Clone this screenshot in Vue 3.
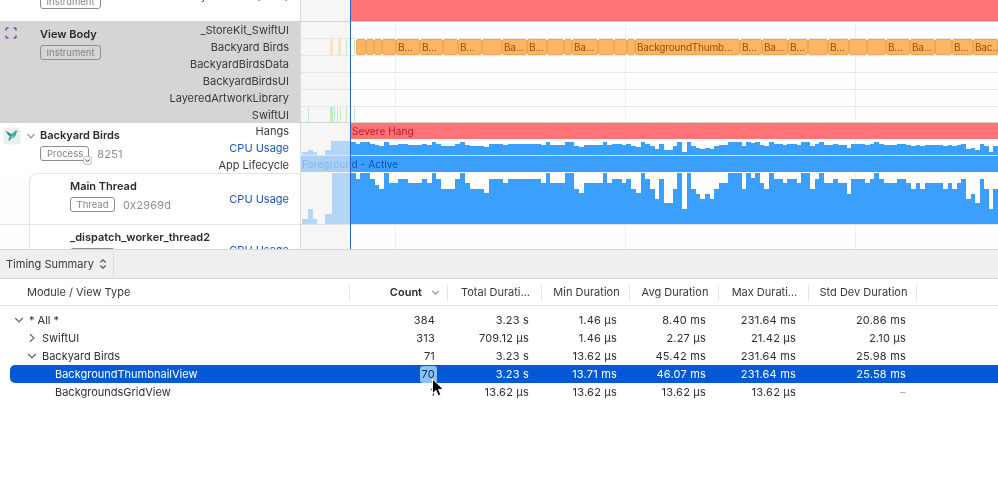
<template>
  <main class="page">
    <section class="trace">
      <!-- clipped track above the view body -->
      <div class="track track-top">
        <div class="side side-top">
          <span class="badge badge-top">Instrument</span>
          <span class="lane-name top-name">Backyard Birds (8251)</span>
        </div>
        <div class="lanes"><div class="hang-bar top-hang"></div></div>
      </div>

      <div class="track track-body">
        <div class="side side-body">
          <svg class="focus-icon" width="12" height="12" viewBox="0 0 12 12">
            <path d="M1 3.5V2.2A1.2 1.2 0 0 1 2.2 1H3.5M8.5 1H9.8A1.2 1.2 0 0 1 11 2.2V3.5M11 8.5V9.8A1.2 1.2 0 0 1 9.8 11H8.5M3.5 11H2.2A1.2 1.2 0 0 1 1 9.8V8.5" fill="none" stroke="#7a35d6" stroke-width="1.4" />
          </svg>
          <div class="title-col">
            <div class="title">View Body</div>
            <span class="badge">Instrument</span>
          </div>
          <div class="names">
            <div v-for="m in modules" :key="m" class="lane-name body-name">{{ m }}</div>
          </div>
        </div>
        <div class="lanes">
          <div class="lane"></div>
          <div class="lane intervals-lane">
            <i class="tick orange" style="left: 29px"></i>
            <i class="tick orange" style="left: 37px"></i>
            <i class="tick green thin" style="left: 45px"></i>
            <i class="tick green thin" style="left: 53px"></i>
            <div class="intervals">
              <div v-for="(s, i) in spans" :key="i" class="interval" :style="{ width: s[0] + 'px' }">{{ s[1] }}</div>
            </div>
          </div>
          <div class="lane"></div>
          <div class="lane"></div>
          <div class="lane"></div>
          <div class="lane intervals-lane last-lane">
            <i class="tick green thin" style="left: 7px"></i>
            <i class="tick green" style="left: 29px"></i>
            <i class="tick green thin" style="left: 33px"></i>
            <i class="tick green thin" style="left: 36px"></i>
            <i class="tick green thin" style="left: 39px"></i>
            <i class="tick green thin" style="left: 45px"></i>
            <i class="tick green thin" style="left: 53px"></i>
          </div>
        </div>
      </div>

      <div class="track track-process">
        <div class="side side-process">
          <svg class="app-icon" width="18" height="18" viewBox="0 0 18 18">
            <rect x="0.5" y="0.5" width="17" height="17" rx="4" fill="#eceff0" />
            <path d="M3 4 8 7 10.5 5.5 12.5 3.5 15 4 13.5 5.3 13 8 10.8 11 8.2 11.6 5.8 14.5 5.4 12 6.6 9.4Z" fill="#2bb3bd" />
            <path d="M3 4 8.2 7.2 7.4 9.6 5 7.4Z" fill="#1b8294" />
            <path d="M8.2 10 10.8 8.2 10.2 11.2 8.2 11.8Z" fill="#eebb55" />
          </svg>
          <svg class="chev chev-process" width="10" height="10" viewBox="0 0 10 10"><path d="M1.5 3.2 5 6.8 8.5 3.2" /></svg>
          <div class="title-col">
            <div class="title">Backyard Birds</div>
            <div class="badge-line">
              <span class="badge badge-menu">Process
                <svg class="mini" width="9" height="9" viewBox="0 0 9 9"><rect x="0.5" y="0.5" width="8" height="8" rx="2" fill="#f3f3f3" stroke="#aaa" stroke-width="0.6" /><path d="M2.5 3.6 4.5 5.6 6.5 3.6" fill="none" stroke="#444" stroke-width="1" /></svg>
              </span>
              <span class="pid">8251</span>
            </div>
          </div>
          <div class="names names-process">
            <div class="lane-name">Hangs</div>
            <div class="lane-name blue-name">CPU Usage</div>
            <div class="lane-name">App Lifecycle</div>
          </div>
        </div>
        <div class="lanes">
          <div class="hang-bar hang-lane">Severe Hang</div>
          <svg class="chart cpu-chart" width="697" height="17" shape-rendering="crispEdges">
            <path :d="cpuBefore" fill="#b3d6f8" />
            <path :d="cpuPath" fill="#3ba0fd" />
          </svg>
          <div class="lifecycle"><span class="life-text">Foreground - Active</span></div>
        </div>
      </div>

      <div class="track track-thread">
        <div class="side side-thread">
          <div class="title-col thread-col">
            <div class="title">Main Thread</div>
            <div class="badge-line">
              <span class="badge">Thread</span>
              <span class="pid">0x2969d</span>
            </div>
          </div>
          <div class="lane-name blue-name thread-name">CPU Usage</div>
        </div>
        <div class="lanes">
          <svg class="chart" width="697" height="51" shape-rendering="crispEdges">
            <path :d="threadBefore" fill="#b3d6f8" />
            <path :d="threadPath" fill="#3ba0fd" />
          </svg>
        </div>
      </div>

      <div class="track track-worker">
        <div class="side side-worker">
          <div class="title-col thread-col">
            <div class="title">_dispatch_worker_thread2</div>
            <div class="badge-line"><span class="badge">Thread</span></div>
          </div>
          <div class="lane-name blue-name thread-name">CPU Usage</div>
        </div>
        <div class="lanes"></div>
      </div>

      <div class="playhead"></div>
    </section>

    <div class="toolbar">
      <button class="picker">
        <span>Timing Summary</span>
        <svg width="8" height="12" viewBox="0 0 8 12"><path d="M1.2 4.5 4 1.8 6.8 4.5M1.2 7.5 4 10.2 6.8 7.5" fill="none" stroke="#555" stroke-width="1.1" /></svg>
      </button>
    </div>

    <div class="table-head grid">
      <div class="head-name">Module / View Type</div>
      <div class="head-count">Count
        <svg class="chev" width="9" height="9" viewBox="0 0 10 10"><path d="M1.5 3.2 5 6.8 8.5 3.2" /></svg>
      </div>
      <div v-for="h in heads" :key="h" class="head-cell">{{ h }}</div>
      <div class="head-fill"></div>
    </div>

    <div class="table-body">
      <div v-for="r in rows" :key="r.name" class="grid row" :class="{ selected: r.selected }">
        <div class="cell-name" :style="{ paddingLeft: r.indent + 'px' }">
          <svg v-if="r.open !== undefined" class="chev row-chev" width="10" height="10" viewBox="0 0 10 10">
            <path :d="r.open ? 'M1.2 3 5 7 8.8 3' : 'M3 1.2 7 5 3 8.8'" />
          </svg>
          {{ r.name }}
        </div>
        <div class="num count-cell"><span :class="{ picked: r.selected }">{{ r.count }}</span></div>
        <div class="num">{{ r.total }}</div>
        <div class="num">{{ r.min }}</div>
        <div class="num">{{ r.avg }}</div>
        <div class="num">{{ r.max }}</div>
        <div class="num std" :class="{ none: r.std === '–' }">{{ r.std }}</div>
        <div></div>
      </div>

      <svg class="cursor" width="14" height="20" viewBox="0 0 14 20">
        <path d="M1.5 1 1.5 15.5 5 12.4 7.2 17.8 9.8 16.7 7.6 11.5 12.2 11.2Z" fill="#000" stroke="#fff" stroke-width="1" />
      </svg>
    </div>
  </main>
</template>

<script setup>
const modules = ['_StoreKit_SwiftUI', 'Backyard Birds', 'BackyardBirdsData', 'BackyardBirdsUI', 'LayeredArtworkLibrary', 'SwiftUI']

const spans = [
  [10, ''], [8, ''], [8, ''], [14, ''], [24, 'B…'], [23, 'B…'], [15, ''], [24, 'B…'], [20, ''],
  [25, 'Ba…'], [20, 'B…'], [17, ''], [8, ''], [26, 'Ba…'], [16, ''], [13, ''], [8, ''],
  [105, 'BackgroundThumb…'], [22, 'B…'], [26, 'Ba…'], [20, 'B…'], [20, ''], [21, 'B…'], [18, ''],
  [19, ''], [24, 'B…'], [25, 'Ba…'], [17, ''], [21, 'B…'], [25, 'Bac…']
]

const heads = ['Total Durati…', 'Min Duration', 'Avg Duration', 'Max Durati…', 'Std Dev Duration']

const rows = [
  { name: '* All *', indent: 29, open: true, count: '384', total: '3.23 s', min: '1.46 µs', avg: '8.40 ms', max: '231.64 ms', std: '20.86 ms' },
  { name: 'SwiftUI', indent: 42, open: false, count: '313', total: '709.12 µs', min: '1.46 µs', avg: '2.27 µs', max: '21.42 µs', std: '2.10 µs' },
  { name: 'Backyard Birds', indent: 42, open: true, count: '71', total: '3.23 s', min: '13.62 µs', avg: '45.42 ms', max: '231.64 ms', std: '25.98 ms' },
  { name: 'BackgroundThumbnailView', indent: 55, selected: true, count: '70', total: '3.23 s', min: '13.71 ms', avg: '46.07 ms', max: '231.64 ms', std: '25.58 ms' },
  { name: 'BackgroundsGridView', indent: 55, count: '1', total: '13.62 µs', min: '13.62 µs', avg: '13.62 µs', max: '13.62 µs', std: '–' }
]

// notch depth of each usage bar, read off the main thread graph
const depthsA = [0, 6, 0, 0, 6, 12, 16, 0, 10, 10, 6, 6, 10, 10, 10, 6, 10, 0, 6, 16, 16, 16, 6, 0, 10, 16, 16, 16, 20, 6, 6, 6, 10, 6, 6, 6, 6, 6, 6, 6, 10, 0, 10, 10, 10, 0, 0, 16, 20, 10, 10, 10, 10, 0, 10, 6, 6, 10, 6, 16, 20, 0, 6]
const depthsB = [16, 26, 6, 30, 30, 16, 0, 36, 0, 16, 21, 26, 21, 26, 16, 10, 10, 0, 0, 0, 16, 0, 5, 0, 10, 16, 0, 6, 6, 10, 6, 6, 10, 0, 0, 16, 6, 0, 10, 10, 6, 10, 10, 21, 6, 6, 6, 10, 6, 0, 6, 10, 10, 10, 6, 6, 10, 16, 10, 16, 10, 10, 10, 10, 16, 10, 16, 10, 6, 26, 21, 30, 6, 16, 36, 16]

function bars(list, from, to, top, bottom) {
  const w = (to - from) / list.length
  return list.map((d, i) => {
    const x = from + i * w
    return `M${x} ${top(d)}H${x + w}V${bottom}H${x}Z`
  }).join('')
}

const threadTop = d => d
const cpuTop = d => 3 + d * 0.27
const threadPath = bars(depthsA, 50, 349, threadTop, 51) + bars(depthsB, 349, 697, threadTop, 51)
const cpuPath = bars(depthsA, 50, 349, cpuTop, 16) + bars(depthsB, 349, 697, cpuTop, 16)

const threadBefore = 'M1 46H7V36H12V46H16V51H1ZM24 41H31V0H50V51H24Z'
const cpuBefore = 'M1 13H7V11H12V13H16V16H1ZM24 11H30V2H50V16H24Z'
</script>

<style scoped>
.page {
  width: 998px;
  height: 479px;
  overflow: hidden;
  display: flex;
  flex-direction: column;
  background: #fff;
  color: #333;
  font-family: Inter, "Liberation Sans", sans-serif;
  font-size: 11px;
  filter: blur(0.3px);
}

.trace {
  position: relative;
  height: 249px;
  flex: none;
  overflow: hidden;
  background:
    linear-gradient(#efefef, #efefef) 395px 0 / 1px 100% no-repeat,
    linear-gradient(#efefef, #efefef) 625px 0 / 1px 100% no-repeat,
    linear-gradient(#efefef, #efefef) 855px 0 / 1px 100% no-repeat,
    linear-gradient(#f6f6f6, #f6f6f6) 301px 0 / 50px 100% no-repeat,
    #fefefe;
}

.track {
  display: flex;
  border-bottom: 1px solid #d4d4d4;
}
.side {
  width: 300px;
  flex: none;
  display: flex;
  background: #fff;
  border-right: 1px solid #dcdcdc;
  box-sizing: content-box;
}
.lanes {
  flex: 1;
  min-width: 0;
  display: flex;
  flex-direction: column;
}

.track-top { height: 21px; }
.side-top {
  align-items: flex-start;
  justify-content: space-between;
  padding: 0 11px 0 40px;
  width: 249px;
  overflow: hidden;
}
.badge-top { margin-top: -6px; }
.top-name { margin-top: -11px; }
.top-hang { margin-left: 50px; flex: 1; }

.track-body { height: 100px; }
.side-body {
  background: #d5d5d5;
  padding: 0 11px 0 5px;
  width: 284px;
}
.focus-icon { margin-top: 5px; flex: none; }
.side-body .title-col { margin: 6px 0 0 23px; }
.names { margin-left: auto; text-align: right; }
.body-name { height: 17px; line-height: 17px; color: #3a3a3a; }

.title-col { display: flex; flex-direction: column; align-items: flex-start; }
.title { font-weight: 600; font-size: 11px; line-height: 13px; color: #2b2b2b; margin-bottom: 4px; white-space: nowrap; }
.badge {
  position: relative;
  display: inline-block;
  border: 1px solid #8e8e8e;
  border-radius: 3px;
  padding: 0 5.5px;
  height: 13px;
  line-height: 13px;
  font-size: 9.5px;
  color: #858585;
  white-space: nowrap;
}
.badge-line { display: flex; align-items: center; gap: 8px; }
.badge-menu { padding: 0 5px 0 6px; }
.mini { position: absolute; right: -4px; bottom: -5px; }
.pid { color: #8e8e8e; font-size: 11px; letter-spacing: 0.2px; }

.lane {
  position: relative;
  height: 16px;
  border-bottom: 1px solid #e6e6e6;
  flex: none;
}
.last-lane { border-bottom: 0; height: 15px; }
.tick {
  position: absolute;
  top: 0;
  bottom: 0;
  width: 3px;
}
.tick.thin { width: 1px; }
.tick.orange { background: #fae0c4; }
.tick.green { background: #c2ecc4; }
.intervals {
  position: absolute;
  left: 55px;
  top: 0;
  right: 0;
  height: 16px;
  display: flex;
  overflow: hidden;
}
.interval {
  flex: none;
  box-sizing: border-box;
  height: 16px;
  line-height: 14px;
  padding-left: 1px;
  background: #feb55f;
  border: 1px solid #eaa75a;
  border-radius: 2px;
  color: #9a4a10;
  font-size: 10px;
  letter-spacing: -0.2px;
  white-space: nowrap;
  overflow: hidden;
}

.hang-bar {
  background: #ff7276;
  color: #c4182b;
  font-size: 10px;
}
.hang-lane {
  height: 16px;
  margin-left: 50px;
  padding-left: 1px;
  line-height: 16px;
  letter-spacing: 0.1px;
  flex: none;
}
.chart { display: block; flex: none; }
.cpu-chart { margin-top: 0; }
.lifecycle {
  height: 16px;
  flex: none;
  line-height: 16px;
  background: linear-gradient(to right, #a9cff5 50px, #3ba0fd 50px);
  border-top: 1px solid #dbeaf8;
  margin-top: -1px;
}
.life-text {
  display: inline-block;
  padding-left: 1px;
  width: 300px;
  font-size: 10px;
  letter-spacing: 0.1px;
  background: linear-gradient(to right, #86b4e6 50px, #0a4fb5 50px);
  -webkit-background-clip: text;
  background-clip: text;
  color: transparent;
}

.track-process { height: 50px; border-bottom: 0; }
.side-process {
  width: 286px;
  padding: 0 11px 0 3px;
}
.app-icon { margin-top: 4px; flex: none; }
.chev { fill: none; stroke: #8c8c8c; stroke-width: 1.2; }
.chev-process { margin: 8px 0 0 5px; flex: none; }
.side-process .title-col { margin: 6px 0 0 4px; }
.names-process .lane-name { height: 17px; line-height: 17px; }
.lane-name { white-space: nowrap; color: #3a3a3a; }
.lane-name.blue-name { color: #1a55b8; }

.track-thread { height: 51px; border-bottom: 1px solid #e4e4e4; }
.side-thread {
  position: relative;
  width: 219px;
  margin-left: 29px;
  padding: 6px 11px 0 40px;
  border-left: 1px solid #e2e2e2;
  border-top: 1px solid #e4e4e4;
  border-top-left-radius: 8px;
  justify-content: space-between;
  height: 44px;
}
.thread-col { margin: 0; }
.thread-name { line-height: 38px; height: 38px; }

.track-worker { height: 24px; border-bottom: 0; }
.side-worker {
  width: 219px;
  margin-left: 29px;
  padding: 6px 11px 0 40px;
  border-left: 1px solid #e2e2e2;
  justify-content: space-between;
  overflow: hidden;
  height: 18px;
}

.playhead {
  position: absolute;
  left: 350px;
  top: 0;
  bottom: 0;
  width: 1px;
  background: #2a62c9;
}

.toolbar {
  height: 30px;
  flex: none;
  box-sizing: border-box;
  background: #efefef;
  border-top: 1px solid #d6d6d6;
  border-bottom: 1px solid #d8d8d8;
  display: flex;
}
.picker {
  all: unset;
  display: flex;
  align-items: center;
  gap: 5px;
  padding: 0 6px;
  width: 101px;
  border-right: 1px solid #dcdcdc;
  font-size: 11px;
  white-space: nowrap;
  color: #3a3a3a;
  margin: 1px 0;
}

.grid {
  display: grid;
  grid-template-columns: 350px 98px 94px 88px 89px 90px 108px 1fr;
}
.table-head {
  height: 27px;
  flex: none;
  box-sizing: border-box;
  border-bottom: 1px solid #e3e3e3;
  align-items: center;
  color: #3a3a3a;
}
.table-head > div {
  height: 17px;
  line-height: 17px;
  border-right: 1px solid #e6e6e6;
  box-sizing: border-box;
  white-space: nowrap;
}
.head-name { padding-left: 27px; }
.head-count {
  display: flex;
  align-items: center;
  justify-content: flex-end;
  gap: 9px;
  padding-right: 7px;
  font-weight: 600;
  color: #2b2b2b;
}
.head-cell { text-align: center; padding-left: 2px; }
.table-head > .head-fill { border-right: 0; }

.table-body {
  position: relative;
  padding-top: 5px;
  flex: 1;
}
.row {
  height: 18px;
  line-height: 18px;
  color: #2f2f2f;
}
.cell-name {
  position: relative;
  white-space: nowrap;
}
.row-chev {
  position: absolute;
  margin-left: -15px;
  top: 4px;
  stroke: #666;
}
.num {
  text-align: right;
  padding-right: 13px;
  letter-spacing: 0.2px;
}
.std { padding-right: 11px; }
.none { color: #aaa; }
.selected {
  color: #fff;
  background: #0359d3;
  margin-left: 10px;
  border-radius: 5px 0 0 5px;
  grid-template-columns: 340px 98px 94px 88px 89px 90px 108px 1fr;
}
.selected .cell-name { margin-left: -10px; }
.picked {
  display: inline-block;
  height: 17px;
  line-height: 17px;
  vertical-align: top;
  margin: 1px -2px 0 0;
  padding: 0 2px;
  background: #8cc1f5;
  color: #12305e;
  border-radius: 3px;
}
.cursor {
  position: absolute;
  left: 431px;
  top: 72px;
}
</style>
